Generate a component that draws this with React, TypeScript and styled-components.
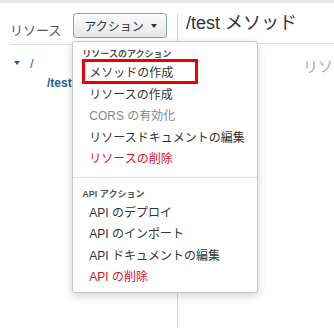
import styled, { createGlobalStyle } from 'styled-components';

const GlobalStyle = createGlobalStyle`
  html, body {
    margin: 0;
    padding: 0;
    overflow: hidden;
    background: #fff;
  }
  body {
    font-family: 'Liberation Sans', 'Noto Sans CJK JP', sans-serif;
    color: #333;
  }
  * {
    box-sizing: border-box;
  }
`;

const TopStrip = styled.div`
  height: 3px;
  background: #e8e8e8;
`;

const Main = styled.div`
  display: flex;
  padding-top: 10px;
`;

const LeftPane = styled.div`
  width: 177px;
  flex-shrink: 0;
  padding-left: 10px;
`;

const LeftHeader = styled.div`
  display: flex;
  align-items: flex-start;
  height: 32px;
  border-bottom: 1px solid #dcdcdc;
`;

const PaneLabel = styled.div`
  margin-top: 10px;
  font-size: 13px;
  line-height: 16px;
  color: #555;
`;

const ActionWrap = styled.div`
  position: relative;
  margin-left: 12px;
`;

const ActionButton = styled.button`
  display: flex;
  align-items: center;
  gap: 7px;
  height: 25px;
  width: 94px;
  padding: 0 0 0 10px;
  border: 1px solid #8da2bd;
  border-radius: 3px;
  background: linear-gradient(#fbfbfb, #e6e6e6);
  font-family: inherit;
  font-size: 12px;
  color: #333;
  white-space: nowrap;
`;

const Caret = styled.span<{ $color?: string }>`
  display: inline-block;
  width: 0;
  height: 0;
  border-left: 3.5px solid transparent;
  border-right: 3.5px solid transparent;
  border-top: 4px solid ${p => p.$color || '#333'};
`;

const Dropdown = styled.div`
  position: absolute;
  left: -1px;
  top: 28px;
  width: 186px;
  padding: 6px 0 3px;
  background: #fff;
  border: 1px solid #c8c8c8;
  border-radius: 3px;
  box-shadow: 0 3px 10px rgba(0, 0, 0, 0.18);
  z-index: 10;
`;

const SectionTitle = styled.div`
  padding-left: 9px;
  margin-bottom: 3px;
  font-size: 9px;
  line-height: 12px;
  font-weight: bold;
  color: #555;
`;

const Item = styled.div<{ $tone?: 'normal' | 'disabled' | 'danger' }>`
  position: relative;
  height: 21.5px;
  line-height: 21.5px;
  padding-left: 16px;
  font-size: 12px;
  white-space: nowrap;
  color: ${p =>
    p.$tone === 'disabled' ? '#888' : p.$tone === 'danger' ? '#d8152a' : '#333'};
`;

const Highlight = styled.span`
  position: absolute;
  left: 9px;
  top: -4px;
  width: 116px;
  height: 25px;
  border: 3px solid #ee0000;
`;

const Divider = styled.div`
  height: 1px;
  background: #dddddd;
  margin: 6px 0 10px;
`;

const Tree = styled.div`
  padding-top: 8px;
`;

const TreeRow = styled.div<{ $indent: number }>`
  display: flex;
  align-items: center;
  height: 20px;
  padding-left: ${p => p.$indent}px;
  gap: 10px;
`;

const TreePath = styled.span<{ $bold?: boolean }>`
  font-size: ${p => (p.$bold ? 12 : 13)}px;
  font-weight: ${p => (p.$bold ? 'bold' : 'normal')};
  color: #1f5e9e;
`;

const RightPane = styled.div`
  flex: 1;
  min-width: 0;
  height: 315px;
  border-left: 1px solid #d6d6d6;
  overflow: hidden;
`;

const RightHeader = styled.div`
  height: 31px;
  padding-left: 8px;
  border-bottom: 1px solid #dcdcdc;
  font-size: 18px;
  line-height: 20px;
  color: #333;
  white-space: nowrap;
`;

const RightBody = styled.div`
  padding: 13px 0 0 125px;
  font-size: 15px;
  line-height: 20px;
  color: #aaa;
  white-space: nowrap;
  overflow: hidden;
`;

const resourceActions = [
  { label: 'メソッドの作成', highlight: true },
  { label: 'リソースの作成' },
  { label: 'CORS の有効化', tone: 'disabled' as const },
  { label: 'リソースドキュメントの編集' },
  { label: 'リソースの削除', tone: 'danger' as const },
];

const apiActions = [
  { label: 'API のデプロイ' },
  { label: 'API のインポート' },
  { label: 'API ドキュメントの編集' },
  { label: 'API の削除', tone: 'danger' as const },
];

export default function App() {
  return (
    <>
      <GlobalStyle />
      <TopStrip />
      <Main>
        <LeftPane>
          <LeftHeader>
            <PaneLabel>リソース</PaneLabel>
            <ActionWrap>
              <ActionButton>
                アクション
                <Caret />
              </ActionButton>
              <Dropdown>
                <SectionTitle>リソースのアクション</SectionTitle>
                {resourceActions.map(a => (
                  <Item key={a.label} $tone={a.tone}>
                    {a.highlight && <Highlight />}
                    {a.label}
                  </Item>
                ))}
                <Divider />
                <SectionTitle>API アクション</SectionTitle>
                {apiActions.map(a => (
                  <Item key={a.label} $tone={a.tone}>
                    {a.label}
                  </Item>
                ))}
              </Dropdown>
            </ActionWrap>
          </LeftHeader>
          <Tree>
            <TreeRow $indent={4}>
              <Caret $color="#1f5e9e" />
              <TreePath>/</TreePath>
            </TreeRow>
            <TreeRow $indent={37}>
              <TreePath $bold>/test</TreePath>
            </TreeRow>
          </Tree>
        </LeftPane>
        <RightPane>
          <RightHeader>/test メソッド</RightHeader>
          <RightBody>リソ</RightBody>
        </RightPane>
      </Main>
    </>
  );
}
